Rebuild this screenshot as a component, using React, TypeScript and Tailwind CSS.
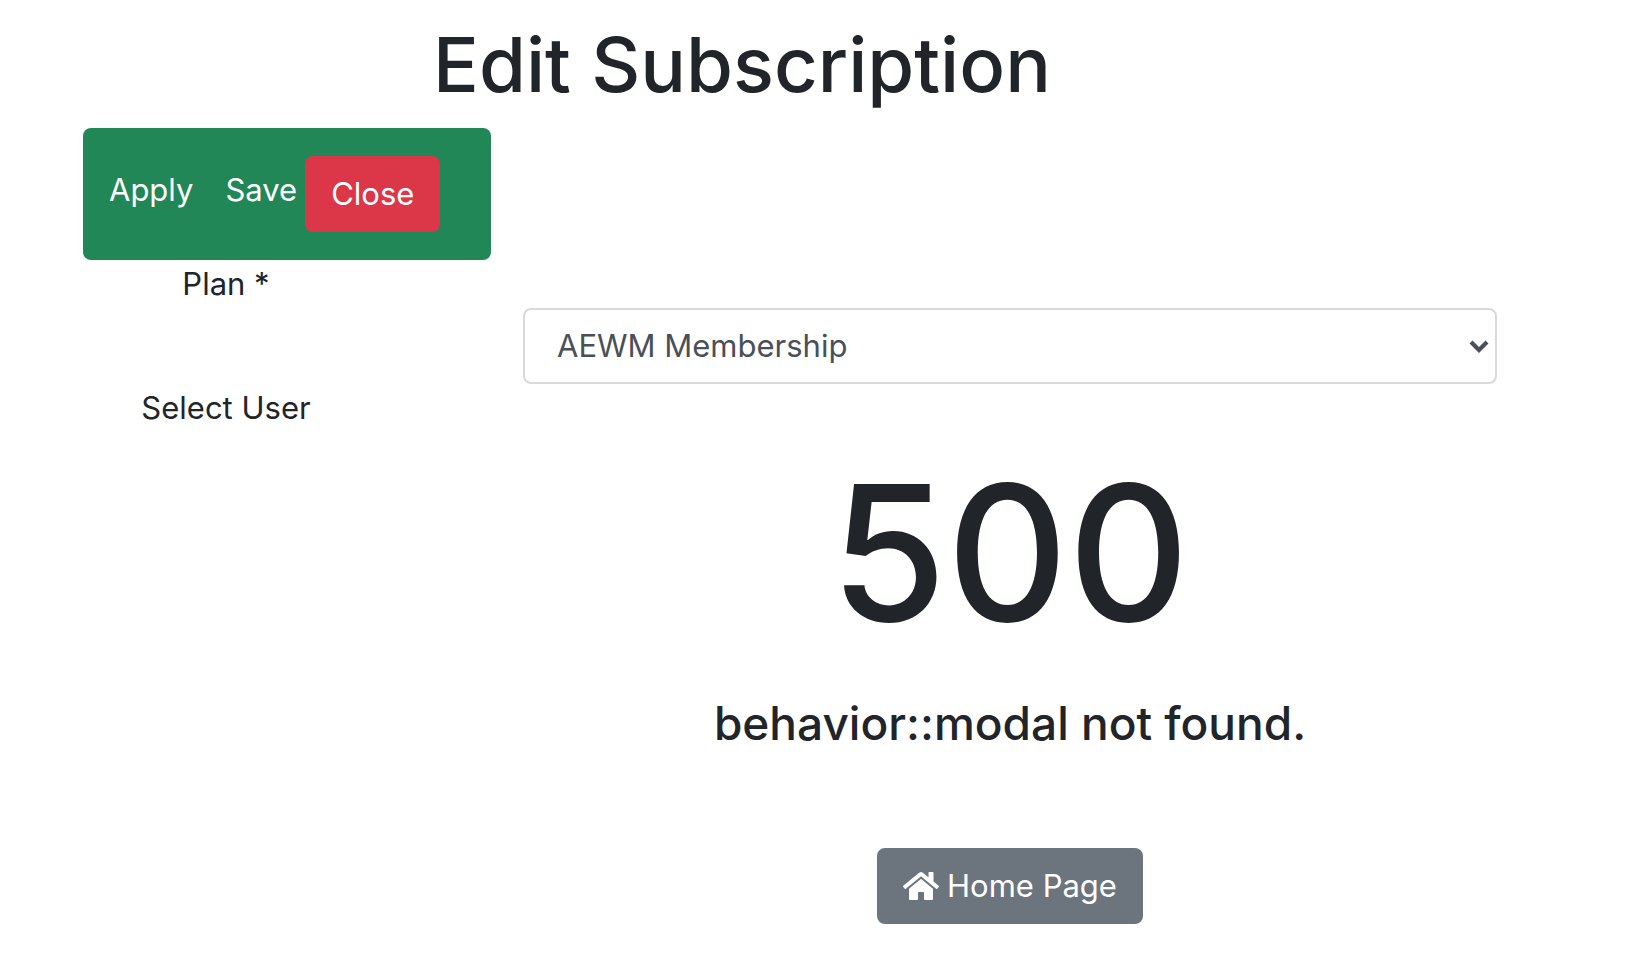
import { useState } from "react"
import { FaHome } from "react-icons/fa"

function ErrorMessage() {
    return (
        <div className="flex flex-col items-center pt-6 text-center">
            <h1 className="text-[188px] leading-[194px] font-medium">500</h1>
            <h2 className="mt-[41px] text-[46px] leading-[64px] font-medium">behavior::modal not found.</h2>
            <a
                href="/"
                className="mt-[93px] flex items-center gap-2 rounded-lg border-2 border-[#6c757d] bg-[#6c757d] px-6 py-3 text-white"
            >
                <FaHome className="h-8 w-9" />
                Home Page
            </a>
        </div>
    )
}

export default function App() {
    const [plan, setPlan] = useState("aewm")

    return (
        <main className="min-h-screen bg-white pr-32 pb-14 pl-[83px] font-['Inter',sans-serif] text-[31px] leading-[48px] text-[#212529]">
            <h1 className="pt-4 pr-24 pb-4 text-center text-[76px] leading-[96px] font-medium">
                Edit Subscription
            </h1>

            <form onSubmit={e => e.preventDefault()}>
                <div
                    role="toolbar"
                    aria-label="Subscription actions"
                    className="flex w-[408px] items-start rounded-lg bg-[#218756] px-[26px] py-7 text-white"
                >
                    <button type="submit" className="mr-8 py-[10px]">
                        Apply
                    </button>
                    <button type="submit" className="mr-2 py-[10px]">
                        Save
                    </button>
                    <button type="button" className="rounded-lg border-2 border-[#db3748] bg-[#db3748] px-6 py-3">
                        Close
                    </button>
                </div>

                <label htmlFor="plan" className="block w-[286px] text-center">
                    Plan *
                </label>
                <div className="relative ml-[440px]">
                    <select
                        id="plan"
                        value={plan}
                        onChange={e => setPlan(e.target.value)}
                        className="block w-full appearance-none rounded-lg border-2 border-[#d9d9d9] bg-white px-8 py-3 text-[#495057]"
                    >
                        <option value="aewm">AEWM Membership</option>
                    </select>
                    <svg
                        viewBox="0 0 20 14"
                        className="pointer-events-none absolute top-8 right-2 h-[14px] w-5"
                        fill="none"
                        stroke="#495057"
                        strokeWidth="4.2"
                    >
                        <path d="M2 2 L10 10 L18 2" />
                    </svg>
                </div>

                <section aria-labelledby="user-label">
                    <p id="user-label" className="w-[286px] text-center">
                        Select User
                    </p>
                    <div className="ml-[440px]">
                        <ErrorMessage />
                    </div>
                </section>
            </form>
        </main>
    )
}
